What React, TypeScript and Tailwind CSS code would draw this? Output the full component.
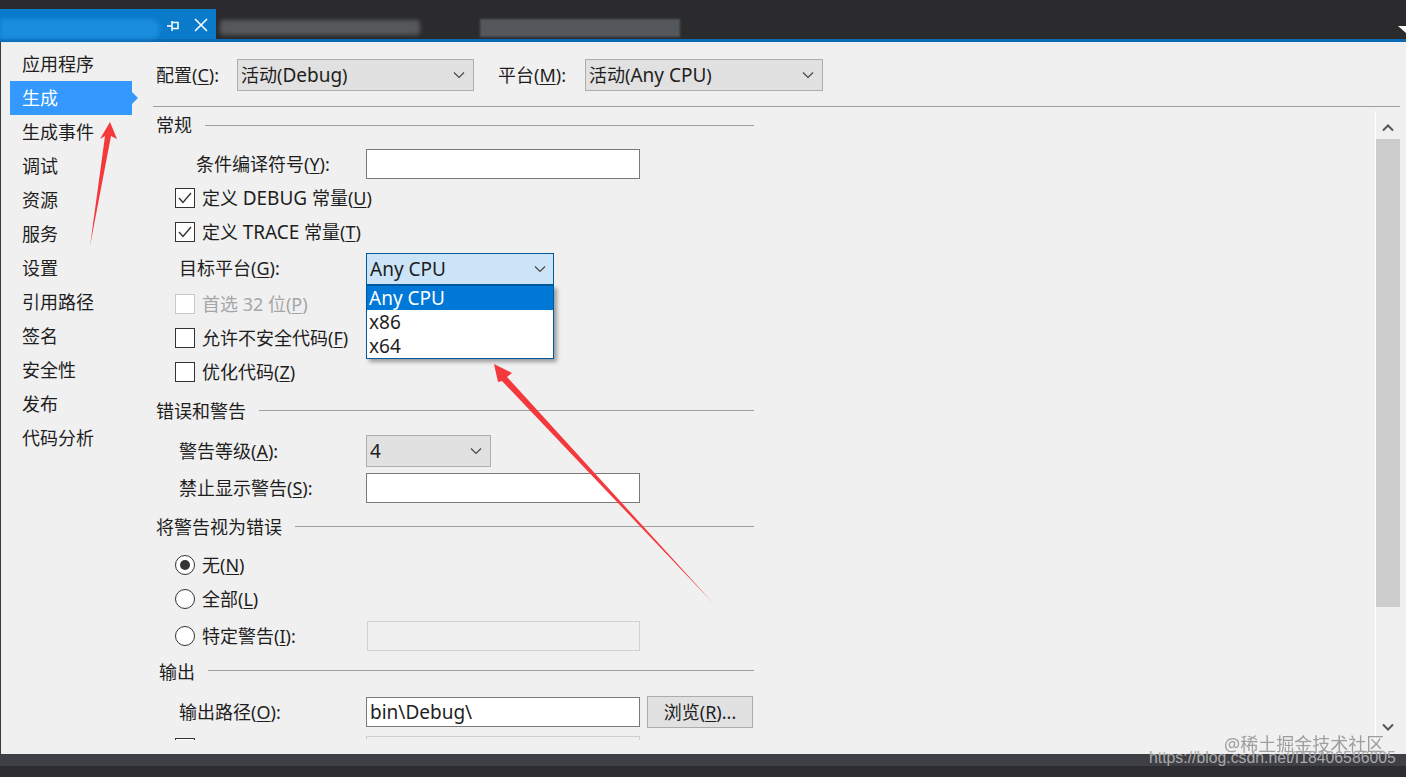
import type { ReactNode } from "react";

const NAV = ["应用程序", "生成", "生成事件", "调试", "资源", "服务", "设置", "引用路径", "签名", "安全性", "发布", "代码分析"];

function Chevron({ className, bold }: { className?: string; bold?: boolean }) {
  return (
    <svg width="12" height="8" viewBox="0 0 12 8" className={className}>
      <polyline points="1,1.5 6,6.5 11,1.5" fill="none" stroke="currentColor" strokeWidth={bold ? 2 : 1.1} />
    </svg>
  );
}

function Check({ checked, disabled }: { checked?: boolean; disabled?: boolean }) {
  return (
    <span className={`flex h-[20px] w-[20px] shrink-0 items-center justify-center border bg-white ${disabled ? "border-[#c8c8c8]" : "border-[#333333]"}`}>
      {checked && (
        <svg width="16" height="14" viewBox="0 0 16 14">
          <polyline points="2,7 6,11.5 14,2" fill="none" stroke="#333" strokeWidth="1.4" />
        </svg>
      )}
    </span>
  );
}

function Radio({ checked }: { checked?: boolean }) {
  return (
    <span className="flex h-[20px] w-[20px] shrink-0 items-center justify-center rounded-full border border-[#333333] bg-white">
      {checked && <span className="h-[10px] w-[10px] rounded-full bg-[#333333]" />}
    </span>
  );
}

function Section({ title, className, lineClass = "" }: { title: string; className: string; lineClass?: string }) {
  return (
    <div className={`flex h-[34px] items-center gap-[13px] ${className}`}>
      <span>{title}</span>
      <span className={`h-px flex-1 bg-[#a0a0a0] ${lineClass}`} />
    </div>
  );
}

function Key({ k }: { k: string }) {
  return (
    <>
      (<span className="underline underline-offset-2">{k}</span>)
    </>
  );
}

function L({ children }: { children: ReactNode }) {
  return <span className="text-[19px]">{children}</span>;
}

function Combo({ text, className }: { text: ReactNode; className: string }) {
  return (
    <div className={`flex items-center justify-between border border-[#adadad] bg-[#e1e1e1] pl-[3px] pr-[8px] ${className}`}>
      <span>{text}</span>
      <Chevron className="text-[#444444]" />
    </div>
  );
}

export default function App() {
  return (
    <div
      className="relative flex h-[777px] w-[1406px] flex-col overflow-hidden bg-[#2d2d30] text-[18px] leading-[24px] text-[#1e1e1e]"
      style={{ fontFamily: '"Noto Sans", "Noto Sans CJK SC", sans-serif' }}
    >
      {/* title strip */}
      <div className="relative flex h-[39px] shrink-0 items-end bg-[#2b2b2d]">
        <div className="relative flex h-[30px] w-[216px] items-center bg-[#0a7acb]">
          <div className="mt-[9px] h-[20px] w-[160px] rounded-r-full bg-[#1a8ede] blur-[2px]" />
          <svg width="14" height="14" viewBox="0 0 14 14" className="absolute left-[166px] top-[10px]">
            <path d="M1 7H6M6 2V12M6 3.5H12V9.5H6" fill="none" stroke="#fff" strokeWidth="1.5" />
          </svg>
          <svg width="16" height="16" viewBox="0 0 16 16" className="absolute left-[193px] top-[8px]">
            <path d="M2 2L14 14M14 2L2 14" fill="none" stroke="#fff" strokeWidth="1.6" />
          </svg>
        </div>
        <div className="mb-[4px] ml-[4px] h-[15px] w-[200px] rounded-sm bg-[#55595b] blur-[2px]" />
        <div className="mb-[2px] ml-[60px] h-[18px] w-[200px] bg-[#54585c] blur-[1px]" />
        <svg width="8" height="8" viewBox="0 0 8 8" className="absolute right-0 top-[26px]">
          <path d="M0 0H8V7Z" fill="#fff" />
        </svg>
      </div>
      <div className="h-[3px] shrink-0 bg-[#0b6ab4]" />

      {/* property page */}
      <div className="flex h-[712px] shrink-0 border-l border-[#3a3a3c] bg-[#f0f0f0]">
        <nav className="w-[152px] shrink-0 pl-[9px] pt-[5px]">
          {NAV.map((n, i) =>
            i === 1 ? (
              <div key={n} className="relative flex h-[34px] w-[122px] items-center bg-[#3399ff] pl-[12px] text-white">
                {n}
                <span className="absolute left-[122px] top-[11px] h-0 w-0 border-y-[6px] border-l-[6px] border-y-transparent border-l-[#3399ff]" />
              </div>
            ) : (
              <div key={n} className="flex h-[34px] items-center pl-[12px]">{n}</div>
            )
          )}
        </nav>

        <div className="flex min-w-0 flex-1 flex-col pr-[6px]">
          <div className="flex h-[65px] shrink-0 items-start border-b border-[#a0a0a0] pl-[3px] pt-[17px]">
            <span className="flex h-[32px] w-[81px] items-center"><span>配置<Key k="C" />:</span></span>
            <Combo text={<>活动(<L>Debug</L>)</>} className="h-[32px] w-[237px]" />
            <span className="ml-[24px] flex h-[32px] w-[87px] items-center"><span>平台<Key k="M" />:</span></span>
            <Combo text={<>活动(<L>Any CPU</L>)</>} className="h-[32px] w-[238px]" />
          </div>

          <div className="flex h-[633px] min-h-0 items-start justify-between">
            <div className="h-[633px] w-[601px] shrink-0 overflow-hidden pt-px">
              <Section title="常规" className="pl-[3px]" />
              <div className="mt-[5px] flex h-[34px] items-center">
                <span className="ml-[43px] w-[170px]">条件编译符号<Key k="Y" />:</span>
                <div className="h-[30px] w-[274px] border border-[#7a7a7a] bg-white" />
              </div>
              <div className="flex h-[34px] items-center gap-[7px] pl-[22px]"><Check checked /><span>定义 <L>DEBUG</L> 常量<Key k="U" /></span></div>
              <div className="flex h-[34px] items-center gap-[7px] pl-[22px]"><Check checked /><span>定义 <L>TRACE</L> 常量<Key k="T" /></span></div>
              <div className="mt-[2px] flex h-[34px] items-center pl-[26px]"><span>目标平台<Key k="G" />:</span></div>
              <div className="mt-[2px] flex h-[34px] items-center gap-[7px] pl-[22px] text-[#a6a6a6]"><Check disabled /><span>首选 32 位<Key k="P" /></span></div>
              <div className="flex h-[34px] items-center gap-[7px] pl-[22px]"><Check /><span>允许不安全代码<Key k="F" /></span></div>
              <div className="flex h-[34px] items-center gap-[7px] pl-[22px]"><Check /><span>优化代码<Key k="Z" /></span></div>

              <Section title="错误和警告" className="mt-[5px] pl-[3px]" lineClass="mb-[2px]" />
              <div className="mt-[6px] flex h-[34px] items-center">
                <span className="ml-[26px] w-[187px]">警告等级<Key k="A" />:</span>
                <Combo text={<L>4</L>} className="h-[32px] w-[125px]" />
              </div>
              <div className="mt-[3px] flex h-[34px] items-center">
                <span className="ml-[26px] w-[187px]">禁止显示警告<Key k="S" />:</span>
                <div className="h-[30px] w-[274px] border border-[#7a7a7a] bg-white" />
              </div>

              <Section title="将警告视为错误" className="mt-[5px] pl-[3px]" lineClass="mb-[2px]" />
              <div className="mt-[4px] flex h-[34px] items-center gap-[7px] pl-[22px]"><Radio checked /><span>无<Key k="N" /></span></div>
              <div className="flex h-[34px] items-center gap-[7px] pl-[22px]"><Radio /><span>全部<Key k="L" /></span></div>
              <div className="mt-[3px] flex h-[34px] items-center">
                <span className="flex w-[214px] items-center gap-[7px] pl-[22px]"><Radio /><span>特定警告<Key k="I" />:</span></span>
                <div className="h-[30px] w-[273px] border border-[#d0d0d0] bg-[#f0f0f0]" />
              </div>

              <Section title="输出" className="mt-[2px] pl-[6px]" lineClass="mb-[4px]" />
              <div className="mt-[6px] flex h-[34px] items-center">
                <span className="ml-[26px] w-[187px]">输出路径<Key k="O" />:</span>
                <div className="flex h-[30px] w-[274px] items-center border border-[#7a7a7a] bg-white pl-[3px] text-[19px]">bin\Debug\</div>
                <div className="ml-[7px] flex h-[32px] w-[106px] items-center justify-center border border-[#adadad] bg-[#e1e1e1]"><span>浏览<Key k="R" />...</span></div>
              </div>
              <div className="mt-[7px] flex h-[12px] items-start">
                <span className="ml-[22px] mt-[2px] h-[20px] w-[20px] border border-[#333333] bg-white" />
                <span className="ml-[171px] h-[20px] w-[274px] border border-[#d0d0d0] bg-[#f0f0f0]" />
              </div>
            </div>

            <div className="mt-[4px] flex h-[629px] w-[25px] shrink-0 flex-col border-l border-white">
              <div className="flex h-[28px] items-center justify-center pt-[6px]">
                <Chevron bold className="rotate-180 text-[#555555]" />
              </div>
              <div className="h-[468px] bg-[#cdcdcd]" />
              <div className="flex flex-1 items-end justify-center pb-[9px]">
                <Chevron bold className="text-[#555555]" />
              </div>
            </div>
          </div>
        </div>
      </div>

      <div className="h-[12px] shrink-0 bg-[#3f3f46]" />
      <div className="flex-1 bg-[#2d2d30]" />

      {/* open combo dropdown */}
      <div className="absolute left-[366px] top-[253px] flex h-[32px] w-[188px] items-center justify-between border border-[#015a9c] bg-[#cce4f7] pl-[3px] pr-[7px]">
        <span className="text-[19px]">Any CPU</span>
        <Chevron className="text-[#444444]" />
      </div>
      <div className="absolute left-[366px] top-[285px] w-[188px] border border-[#015a9c] bg-white text-[19px] shadow-[3px_3px_4px_rgba(0,0,0,0.35)]">
        <div className="flex h-[24px] items-center bg-[#0078d7] pl-[2px] text-white">Any CPU</div>
        <div className="flex h-[24px] items-center pl-[2px]">x86</div>
        <div className="flex h-[24px] items-center pl-[2px]">x64</div>
      </div>

      {/* hand-drawn annotations */}
      <svg className="pointer-events-none absolute left-0 top-0" width="1406" height="777" viewBox="0 0 1406 777">
        <polygon points="110,122 117,139 111,136 90,246 105,136 100,139" fill="#f4393c" />
        <polygon points="494,364 512,373 507,377 714,604 502,381 498,382" fill="#f4393c" />
      </svg>

      {/* watermarks */}
      <div className="absolute left-[1224px] top-[732px] text-[18px] text-[#8a8a8a] opacity-80">@稀土掘金技术社区</div>
      <div
        className="absolute left-[1149px] top-[749px] text-[15.8px] leading-[18px] text-[#a9a9a9]"
        style={{ fontFamily: '"Liberation Sans", sans-serif' }}
      >
        https://blog.csdn.net/I18406586005
      </div>
    </div>
  );
}
